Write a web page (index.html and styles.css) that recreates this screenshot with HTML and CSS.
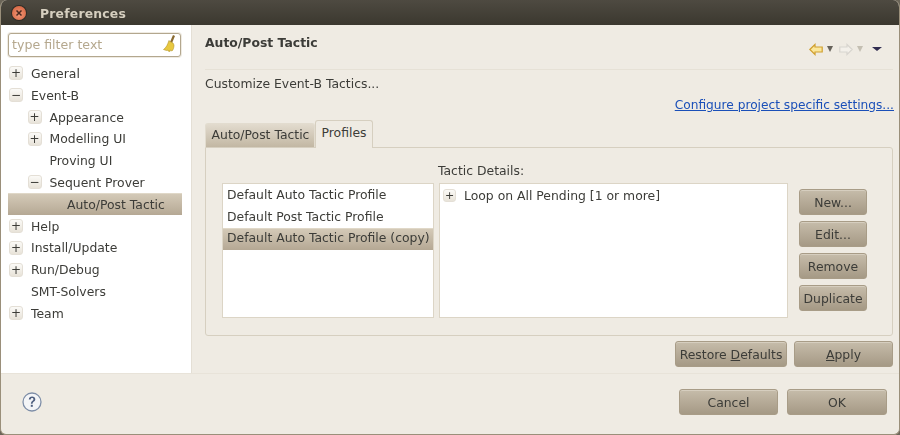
FILE: index.html
```html
<!DOCTYPE html>
<html lang="en">
<head>
<meta charset="utf-8">
<title>Preferences</title>
<link rel="stylesheet" href="styles.css">
</head>
<body>
<div class="window">
  <header class="titlebar">
    <span class="close"><svg width="10" height="10" viewBox="0 0 10 10"><path d="M2.5 2.5l5 5M7.5 2.5l-5 5" stroke="#4a2a20" stroke-width="1.5" fill="none"/></svg></span>
    <span class="title">Preferences</span>
  </header>
  <div class="main">
    <aside class="sidebar">
      <div class="filter">
        <span class="filter-text">type filter text</span>
        <svg class="broom" width="16" height="20" viewBox="0 0 16 20"><path d="M12 1l2 1-3 7-2-1z" fill="#8a6a30"/><path d="M8 7l4 2 1 2c0 3-1 5-2 6l-2-1 0 1.500-2-.5-.5-1-1 .5-3-1c3-2 4-5 5.500-9z" fill="#e8c840" stroke="#b3962a" stroke-width=".6"/></svg>
      </div>
      <ul class="tree">
        <li class="row"><span class="twist">+</span><span>General</span></li>
        <li class="row"><span class="twist">−</span><span>Event-B</span></li>
        <li class="row lvl1"><span class="twist">+</span><span>Appearance</span></li>
        <li class="row lvl1"><span class="twist">+</span><span>Modelling UI</span></li>
        <li class="row lvl1"><span class="twist none"></span><span>Proving UI</span></li>
        <li class="row lvl1"><span class="twist">−</span><span>Sequent Prover</span></li>
        <li class="row lvl2 selected"><span class="twist none"></span><span>Auto/Post Tactic</span></li>
        <li class="row"><span class="twist">+</span><span>Help</span></li>
        <li class="row"><span class="twist">+</span><span>Install/Update</span></li>
        <li class="row"><span class="twist">+</span><span>Run/Debug</span></li>
        <li class="row"><span class="twist none"></span><span>SMT-Solvers</span></li>
        <li class="row"><span class="twist">+</span><span>Team</span></li>
      </ul>
    </aside>
    <section class="content">
      <div class="head">
        <h1 class="page-title">Auto/Post Tactic</h1>
        <div class="nav">
          <svg width="14" height="13" viewBox="0 0 14 13"><path d="M.8 6.500L6 1.500V4H13.200V9H6V11.500z" fill="#fbe79a" stroke="#d0a030" stroke-width="1.200"/></svg>
          <span class="tri grey"></span>
          <svg class="fwd" width="14" height="13" viewBox="0 0 14 13"><path d="M13.200 6.500L8 1.500V4H.8V9H8V11.500z" fill="#f3f0ea" stroke="#d8d5cf" stroke-width="1.200"/></svg>
          <span class="tri pale"></span>
          <span class="tri dark"></span>
        </div>
      </div>
      <p class="desc">Customize Event-B Tactics...</p>
      <div class="linkrow"><a class="link" href="#">Configure project specific settings...</a></div>
      <div class="tabs">
        <span class="tab">Auto/Post Tactic</span>
        <span class="tab active">Profiles</span>
      </div>
      <div class="folder">
        <div class="label">Tactic Details:</div>
        <div class="panes">
          <ul class="list profiles">
            <li>Default Auto Tactic Profile</li>
            <li>Default Post Tactic Profile</li>
            <li class="selected">Default Auto Tactic Profile (copy)</li>
          </ul>
          <div class="list details">
            <div class="detail-row"><span class="twist small">+</span><span>Loop on All Pending [1 or more]</span></div>
          </div>
          <div class="side-buttons">
            <button class="btn">New...</button>
            <button class="btn">Edit...</button>
            <button class="btn">Remove</button>
            <button class="btn">Duplicate</button>
          </div>
        </div>
      </div>
      <div class="apply-row">
        <button class="btn restore">Restore <u>D</u>efaults</button>
        <button class="btn apply"><u>A</u>pply</button>
      </div>
    </section>
  </div>
  <footer class="footer">
    <svg class="help" width="20" height="20" viewBox="0 0 20 20"><circle cx="10" cy="10" r="9" fill="#f4f5f7" stroke="#7f8fa8" stroke-width="1.300"/><path d="M6.800 7.600c0-2 1.500-3 3.300-3s3.200 1 3.200 2.700c0 2.400-2.700 2.300-2.700 4.500H8.900c0-3 2.500-3 2.500-4.400 0-.8-.5-1.300-1.300-1.300-.9 0-1.400.6-1.400 1.500z" fill="#4f5f7f"/><rect x="8.800" y="12.800" width="2" height="2" fill="#4f5f7f"/></svg>
    <div class="footer-buttons">
      <button class="btn big">Cancel</button>
      <button class="btn big ok">OK</button>
    </div>
  </footer>
</div>
</body>
</html>
```
FILE: styles.css
```css
* { box-sizing: border-box; }
html, body { margin: 0; padding: 0; background: #6b6558; }
body { width: 900px; height: 435px; overflow: hidden; font-family: "DejaVu Sans", sans-serif; font-size: 12.4px; color: #3c3c38; }
ul { list-style: none; margin: 0; padding: 0; }
.window { width: 900px; height: 435px; display: flex; flex-direction: column; background: #efebe3; border: 1px solid #9a8f7a; border-top: 0; border-radius: 7px 7px 6px 6px; overflow: hidden; filter: blur(.35px); }
.titlebar { height: 25px; flex: none; display: flex; align-items: center; padding: 1px 0 0 11px; gap: 14px; background: linear-gradient(#4e4a41, #3b382f); }
.close { width: 14px; height: 14px; border-radius: 50%; background: radial-gradient(circle at 50% 60%, #f2987a, #cf5a34); display: flex; align-items: center; justify-content: center; box-shadow: 0 0 0 1px #2f2c26; }
.title { font-weight: bold; font-size: 12.4px; color: #d6cfbf; letter-spacing: .2px; }
.main { height: 348px; flex: none; display: flex; }
.sidebar { width: 191px; flex: none; background: #fff; padding: 8px 10px 0 7px; border-right: 1px solid #e4dfd5; }
.filter { width: 173px; height: 24px; display: flex; align-items: center; justify-content: space-between; padding: 0 3px 2px 3px; background: #fff; border: 1px solid #b3a78e; border-radius: 3px; box-shadow: 0 0 0 1px #efebe3; }
.filter-text { color: #b5a88e; font-size: 12.6px; }
.tree { margin: 5.600px -10px 0 -7px; padding-left: 7px; }
.row { height: 21.800px; display: flex; align-items: center; width: 174px; white-space: nowrap; }
.twist { width: 14px; height: 14px; flex: none; margin: 0 8px 0 1px; display: flex; align-items: center; justify-content: center; font-size: 12px; line-height: 1; border: 1px solid #e4dfd6; border-radius: 3px; background: linear-gradient(#fbfaf7, #e8e3d9); color: #3c3c38; }
.twist.none { border: 0; background: none; }
.lvl1 { padding-left: 18.500px; }
.lvl2 { padding-left: 36px; }
.selected { background: linear-gradient(#d5cbb9, #b5a894); box-shadow: inset 0 1px 0 #e0d8c8; }
.content { flex: 1; padding: 0 6px 0 13px; min-width: 0; }
.head { height: 45px; display: flex; justify-content: space-between; border-bottom: 1px solid #e6e1d6; }
.page-title { margin: 10px 0 0; font-size: 12.4px; font-weight: bold; line-height: 16px; color: #3c3c38; }
.nav { display: flex; align-items: center; height: 16px; margin: 16px 11px 0 0; }
.tri { width: 0; height: 0; margin-left: 4px; border-style: solid; border-width: 6px 3.500px 0; border-color: #66625a transparent transparent; }
.tri.pale { border-top-color: #c4bfb2; }
.tri.dark { border-width: 4px 5px 0; border-top-color: #302c50; margin-left: 9px; }
.fwd { margin-left: 6px; }
.desc { margin: 6px 0 0; line-height: 16px; }
.linkrow { text-align: right; line-height: 16px; margin: 5px -1px 0 0; font-size: 12.200px; }
.link { color: #1a4fb8; }
.tabs { display: flex; align-items: flex-end; height: 29px; margin-top: 5px; padding-top: 1px; }
.tab { height: 24px; width: 110px; padding-left: 1px; text-align: center; line-height: 22px; border: 1px solid #e2dccf; border-bottom: 0; border-radius: 3px 3px 0 0; background: linear-gradient(#e2dbce, #c2b7a3); }
.tab.active { height: 28px; width: 58px; padding-left: 0; line-height: 24px; background: #efebe3; border-color: #d6cfc0; margin-bottom: -1px; position: relative; }
.folder { width: 688px; height: 189px; border: 1px solid #d6cfc0; border-radius: 0 3px 3px 3px; padding: 15px 4px 0 16px; }
.label { padding-left: 216px; line-height: 16px; }
.panes { display: flex; margin-top: 4px; }
.list { background: #fff; border: 1px solid #dcd5c6; height: 135px; }
.profiles { width: 212px; padding-top: 1px; }
.profiles li { height: 21.700px; line-height: 20.500px; padding-left: 4px; white-space: nowrap; }
.details { width: 349px; margin-left: 5px; padding: 0 0 0 1px; }
.detail-row { height: 22px; display: flex; align-items: center; }
.twist.small { width: 13px; height: 13px; margin: 0 8px 0 2px; font-size: 11px; }
.side-buttons { display: flex; flex-direction: column; gap: 6px; margin: 6px 0 0 11px; }
.btn { font: inherit; color: #3c3c38; width: 68px; height: 26px; padding: 0; border: 1px solid #a89c87; border-radius: 3px; background: linear-gradient(#c6bcaa, #a59985); box-shadow: inset 0 1px 0 #d6cebf; white-space: nowrap; }
.apply-row { display: flex; justify-content: flex-end; gap: 7px; margin: 5px 0 0; }
.restore { width: 112px; }
.apply { width: 99px; }
.footer { flex: 1; display: flex; align-items: center; justify-content: space-between; padding: 0 12px 4px 21px; border-top: 1px solid #e8e3d9; }
.footer-buttons { display: flex; gap: 9px; }
.big { width: 99px; }
.ok { width: 100px; }
```
